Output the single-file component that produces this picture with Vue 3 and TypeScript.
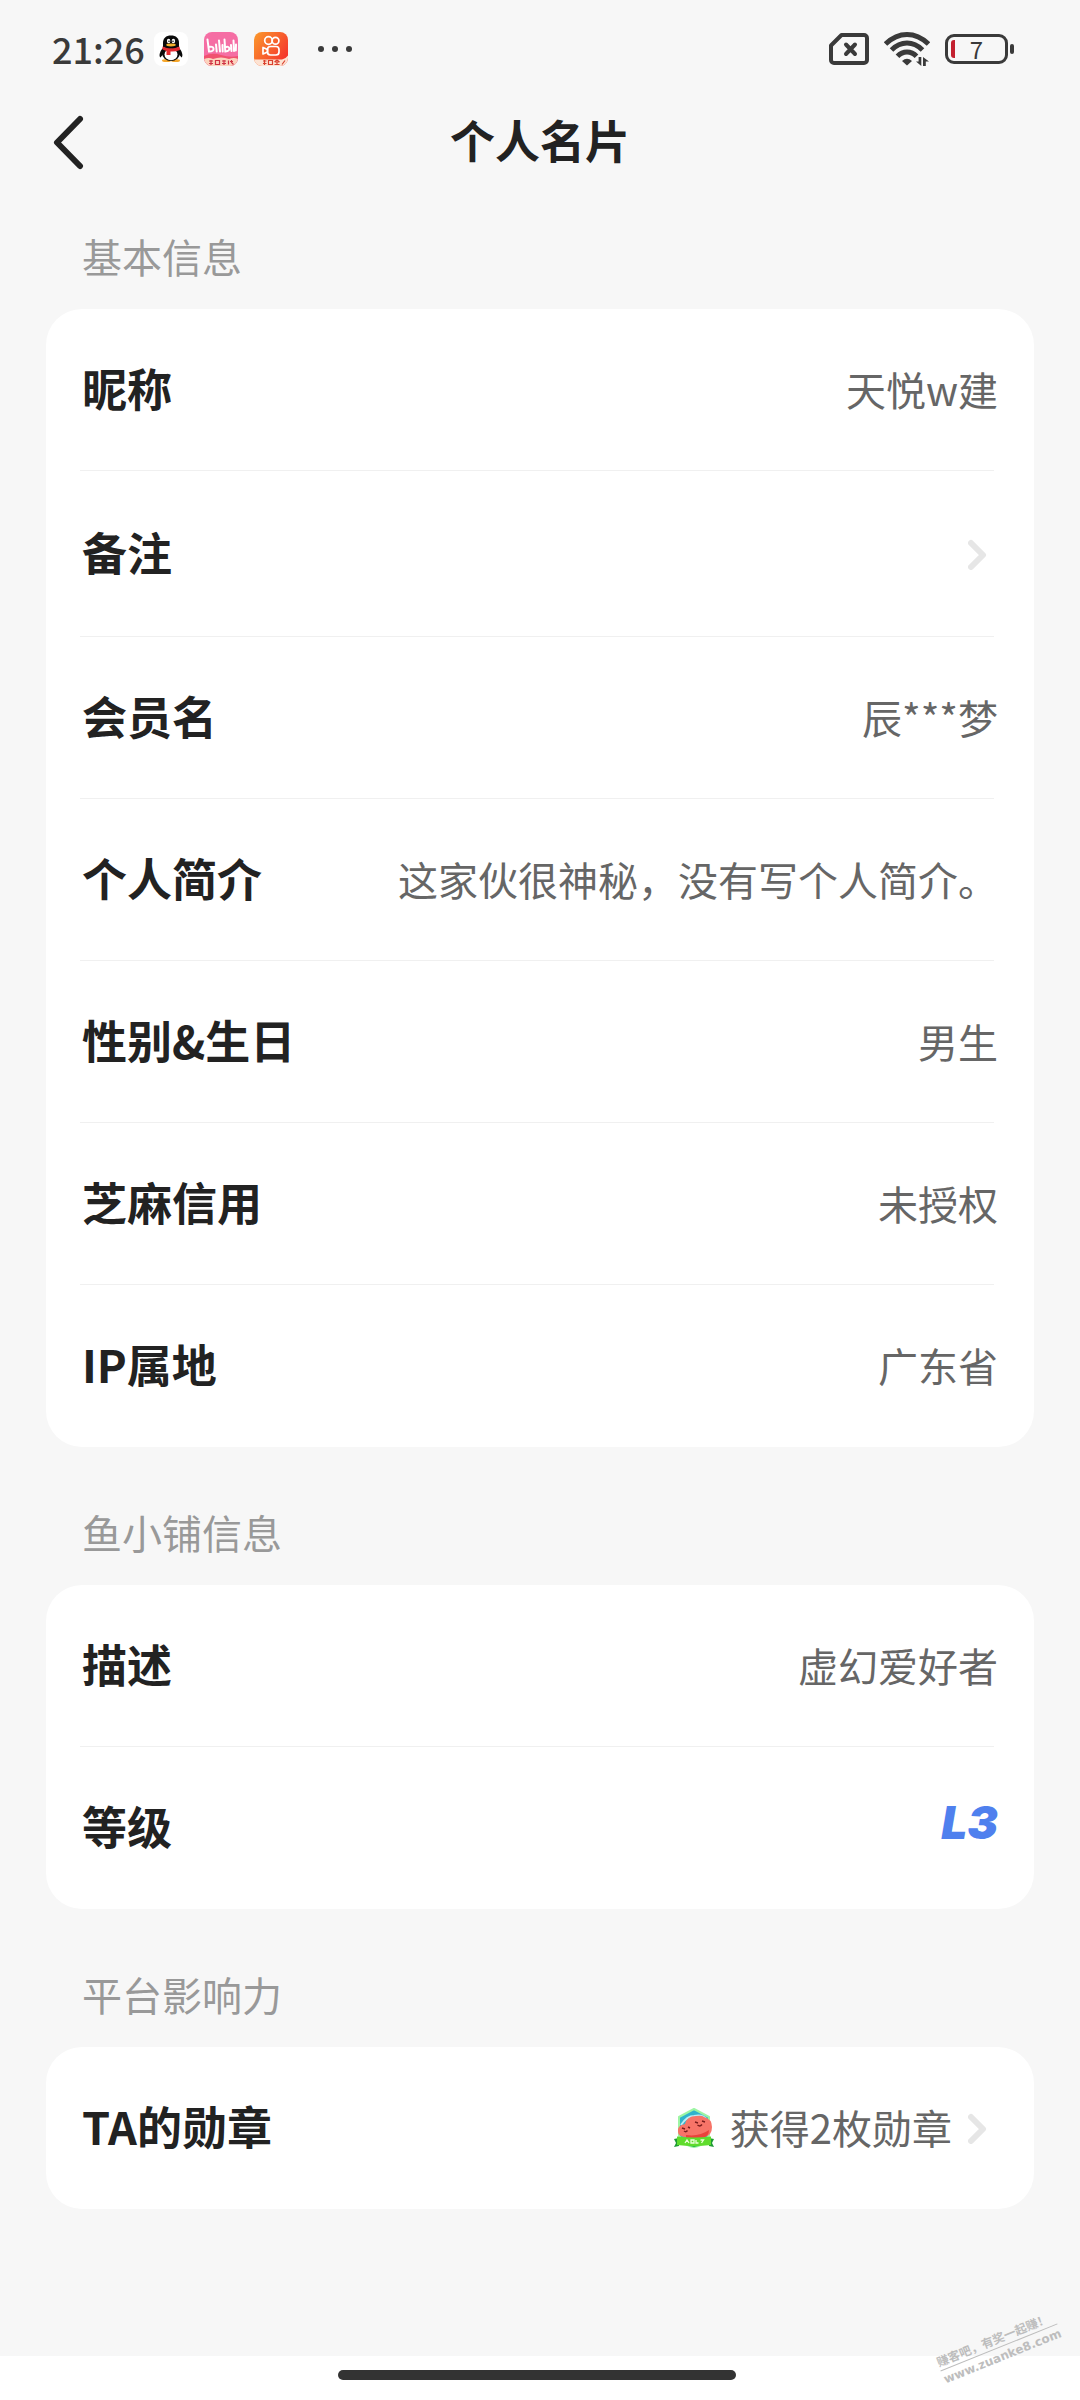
<script setup lang="ts">
interface Row {
  label: string
  value?: string
  link?: boolean
  tall?: boolean
  level?: boolean
  badge?: boolean
}

interface Section {
  title: string
  rows: Row[]
}

const sections: Section[] = [
  {
    title: '基本信息',
    rows: [
      { label: '昵称', value: '天悦w建' },
      { label: '备注', link: true, tall: true },
      { label: '会员名', value: '辰***梦' },
      { label: '个人简介', value: '这家伙很神秘，没有写个人简介。' },
      { label: '性别&生日', value: '男生' },
      { label: '芝麻信用', value: '未授权' },
      { label: 'IP属地', value: '广东省' },
    ],
  },
  {
    title: '鱼小铺信息',
    rows: [
      { label: '描述', value: '虚幻爱好者' },
      { label: '等级', value: 'L3', level: true },
    ],
  },
  {
    title: '平台影响力',
    rows: [{ label: 'TA的勋章', value: '获得2枚勋章', link: true, badge: true }],
  },
]
</script>

<template>
  <div class="page">
    <div class="status">
      <span class="time">21:26</span>
      <div class="apps">
        <!-- QQ -->
        <svg class="app" viewBox="0 0 34 34" aria-hidden="true">
          <rect width="34" height="34" rx="8" fill="#fff" />
          <path d="M9 16C5 20 5 25 6.500 25.500L10 21zM25 16c4 4 4 9 2.500 9.500L24 21z" fill="#0a0a0a" />
          <ellipse cx="12.500" cy="28.500" rx="4.500" ry="1.500" fill="#f6a72c" />
          <ellipse cx="21.500" cy="28.500" rx="4.500" ry="1.500" fill="#f6a72c" />
          <ellipse cx="17" cy="21" rx="9" ry="8" fill="#0a0a0a" />
          <path d="M9 15V11C9 6 12 3.500 17 3.500S25 6 25 11V15z" fill="#0a0a0a" />
          <ellipse cx="17" cy="22.500" rx="6.500" ry="5.800" fill="#fff" />
          <path d="M8.500 14.500Q17 18.500 25.500 14.500L26 18Q21 20 16.500 19.500V23H12.500V19L8.500 17.500z" fill="#e32a30" />
          <ellipse cx="14.600" cy="9" rx="1.700" ry="2.300" fill="#fff" />
          <ellipse cx="19.400" cy="9" rx="1.700" ry="2.300" fill="#fff" />
          <circle cx="15" cy="9.300" r=".8" fill="#111" />
          <circle cx="19" cy="9.300" r=".8" fill="#111" />
          <ellipse cx="17" cy="13" rx="4.800" ry="1.400" fill="#f5b32d" />
        </svg>
        <!-- bilibili -->
        <svg class="app" viewBox="0 0 34 34" aria-hidden="true">
          <defs>
            <clipPath id="biliClip"><rect width="34" height="34" rx="8" /></clipPath>
          </defs>
          <g clip-path="url(#biliClip)">
            <rect width="34" height="34" fill="#f56ea4" />
            <path d="M0 24q8-4 17-1t17 1v10H0z" fill="#f0526f" />
            <path d="M0 27q5-2 9 0 8-3 16 0 5-2 9 0v7H0z" fill="#fbd3bd" />
            <g fill="none" stroke="#fff" stroke-width="2" stroke-linecap="round">
              <path d="M3.500 7.500L5 19.500q5 0 4.500-3-.5-2.500-5-1.500M12 12.500l.7 7M15 8.500l1 11M18.500 13l.2 6.500M20.500 7.500l.8 12q4.500-.5 4-3.200-.5-2.300-4.300-1M27 13l.5 6M29.500 8.500l.5 10.500M32 12.500l-.2 6" />
            </g>
            <path d="M5 29h4M5 31.500h4M7 28v5M11.500 28.500h4v4h-4zM18 29h4M18 31.500h4M20 28v5M24.500 28.500v4M26 29.500h3M27.500 28v2.500l2 2" fill="none" stroke="#cf3345" stroke-width="1.200" />
          </g>
        </svg>
        <!-- Kuaishou -->
        <svg class="app" viewBox="0 0 34 34" aria-hidden="true">
          <defs>
            <clipPath id="ksClip"><rect width="34" height="34" rx="8" /></clipPath>
            <linearGradient id="ksFill" x1="0" y1="0" x2="1" y2=".7">
              <stop offset="0" stop-color="#fb9a2c" />
              <stop offset="1" stop-color="#f5342c" />
            </linearGradient>
          </defs>
          <g clip-path="url(#ksClip)">
            <rect width="34" height="34" fill="url(#ksFill)" />
            <path d="M0 27.500h28q4-1 6-4V34H0z" fill="#fde3d3" />
            <g fill="none" stroke="#fff" stroke-width="1.700" stroke-linejoin="round">
              <circle cx="14.500" cy="8.500" r="3.800" />
              <circle cx="21.500" cy="8.800" r="3.400" />
              <rect x="13.500" y="14.500" width="11.500" height="8.500" rx="3" />
              <path d="M13.500 17.500L9 15.500V22l4.500-2z" />
            </g>
            <path d="M9 29h3.500M9 31.500h3.500M10.500 28v5M14.500 28.500h4v4h-4zM20.500 30h5M23 28l-2.500 2M23 28l2.500 2M23 30v3M20.500 32.500h5M28 32.500l3-4" fill="none" stroke="#d9402f" stroke-width="1.200" />
          </g>
        </svg>
      </div>
      <svg class="dots" viewBox="0 0 34 8" aria-hidden="true">
        <g fill="#3a3a3a">
          <circle cx="3" cy="4" r="3" />
          <circle cx="17" cy="4" r="3" />
          <circle cx="31" cy="4" r="3" />
        </g>
      </svg>
      <div class="system">
        <svg class="sim" viewBox="0 0 40 32" aria-hidden="true">
          <path d="M12.500 2H35a3 3 0 0 1 3 3v22a3 3 0 0 1-3 3H5a3 3 0 0 1-3-3V12.500z" fill="none" stroke="#3a3a3a" stroke-width="4" stroke-linejoin="round" />
          <path d="M17 11.500l9 9.500M26 11.500L17 21" fill="none" stroke="#3a3a3a" stroke-width="4" stroke-linecap="round" />
        </svg>
        <svg class="wifi" viewBox="0 0 46 34" aria-hidden="true">
          <g fill="none" stroke="#3a3a3a" stroke-width="5">
            <path d="M1.500 12Q11.500 2.500 23 2.500T44.500 12" />
            <path d="M7.500 18Q14.500 11 23 11T38.500 18" />
            <path d="M13.500 24.300Q17.500 20 23 20T32.500 24.300" />
          </g>
          <path d="M18 29q5-4.500 10 0l-5 4.500z" fill="#3a3a3a" />
          <path d="M37.300 25v9l-5.300-4.600h2.600V25zM39 34v-9l6 4.600h-3.200V34z" fill="#3a3a3a" />
        </svg>
        <div class="battery">
          <span class="charge"></span>
          <span>7</span>
        </div>
        <span class="tip"></span>
      </div>
    </div>

    <header class="nav">
      <button class="back" type="button" aria-label="返回">
        <svg viewBox="0 0 32 56" aria-hidden="true">
          <path d="M28 5L5 28.500 28 52" fill="none" stroke="#222" stroke-width="6" stroke-linecap="round" stroke-linejoin="round" />
        </svg>
      </button>
      <h1>个人名片</h1>
    </header>

    <main>
      <section v-for="section in sections" :key="section.title">
        <h2>{{ section.title }}</h2>
        <div class="card">
          <component
            :is="row.link ? 'button' : 'div'"
            v-for="row in section.rows"
            :key="row.label"
            :type="row.link ? 'button' : undefined"
            class="row"
            :class="{ tall: row.tall }"
          >
            <span class="label">{{ row.label }}</span>
            <span class="side">
              <svg v-if="row.badge" class="badge" viewBox="0 0 40 40" aria-hidden="true">
                <path d="M20 1L35 9v19l-8 9q-7 4-14 0l-8-9V9z" fill="#2fb3cc" stroke="#9df5a4" stroke-width="2" stroke-linejoin="round" />
                <path d="M12 36h16q-8 6-16 0z" fill="#27b63d" />
                <path d="M7 17q6-9 13-9 9-2 13 4" fill="none" stroke="#b9ecf4" stroke-width="2" />
                <path d="M4 24q-1-7 7-8 2-8 11-8 6-1 8 1 8 2 8 10 0 9-8 10H10q-6-1-6-5z" fill="#f77468" />
                <path d="M12 27q13 2 23-5 0 6-6 8H12z" fill="#ea423c" />
                <path d="M8 20l3 1M14 19l2 1M10 23q2 1.500 3.500-.5M21 14l3 1M28 13l3 1M23.500 17q2.500 2 4.500-.5" fill="none" stroke="#7c1d1d" stroke-width="1.400" />
                <path d="M0 31l5-1v8l-5 1 2-4zM40 31l-5-1v8l5 1-2-4z" fill="#1e9a34" />
                <path d="M3 28.500q17 2 34 0V37q-17 2-34 0z" fill="#5fdc2c" />
                <path d="M11 35l2-3 2 3M17 32h3v3h-3zM22 32v3h2.500M26.500 32h3l-2 3" fill="none" stroke="#eaffd8" stroke-width="1.300" />
              </svg>
              <span v-if="row.value" :class="row.level ? 'level' : 'value'">{{ row.value }}</span>
              <svg v-if="row.link" class="chevron" viewBox="0 0 30 32" aria-hidden="true">
                <path d="M3 5l12 12L3 29" fill="none" stroke="#e6e6e6" stroke-width="6" stroke-linecap="round" stroke-linejoin="round" />
              </svg>
            </span>
          </component>
        </div>
      </section>
    </main>

    <footer class="home">
      <span class="handle"></span>
    </footer>

    <div class="watermark">
      <span class="slogan">赚客吧，有奖一起赚！</span>
      <span class="site">www.zuanke8.com</span>
    </div>
  </div>
</template>

<style>
body {
  margin: 0;
  background: #f7f7f7;
}
</style>

<style scoped>
.page {
  position: relative;
  display: flex;
  flex-direction: column;
  min-height: 100vh;
  overflow: hidden;
  background: #f7f7f7;
  color: #222;
  font-family: "Noto Sans CJK SC", "Noto Sans", sans-serif;
}

.status {
  display: flex;
  align-items: center;
  height: 98px;
  padding: 0 66px 0 52px;
  color: #3a3a3a;
}

.time {
  padding-bottom: 2px;
  font-size: 36px;
  line-height: 48px;
  font-weight: 500;
}

.apps {
  display: flex;
  gap: 16px;
  margin-left: 9px;
}

.app {
  width: 34px;
  height: 34px;
}

.dots {
  width: 34px;
  height: 8px;
  margin-left: 30px;
}

.system {
  display: flex;
  align-items: center;
  margin-left: auto;
}

.sim {
  width: 40px;
  height: 32px;
}

.wifi {
  width: 46px;
  height: 34px;
  margin: 0 15px;
}

.battery {
  position: relative;
  display: flex;
  align-items: center;
  justify-content: center;
  box-sizing: border-box;
  width: 63px;
  height: 30px;
  border: 3px solid #3a3a3a;
  border-radius: 9px;
  font-size: 24px;
  line-height: 24px;
}

.charge {
  position: absolute;
  left: 3px;
  top: 3px;
  bottom: 3px;
  width: 4px;
  border-radius: 3px 0 0 3px;
  background: #c3202f;
}

.tip {
  width: 4px;
  height: 10px;
  margin-left: 2px;
  border-radius: 2px;
  background: #3a3a3a;
}

.nav {
  display: grid;
  grid-template-columns: 1fr auto 1fr;
  align-items: center;
  height: 88px;
  padding: 0 52px;
}

button {
  margin: 0;
  padding: 0;
  border: 0;
  background: none;
  color: inherit;
  font: inherit;
  text-align: left;
  cursor: pointer;
}

.back {
  width: 32px;
  height: 56px;
}

.back svg {
  display: block;
  width: 32px;
  height: 56px;
}

h1,
.label {
  margin: 0;
  padding-bottom: 4px;
  font-size: 45px;
  line-height: 60px;
  font-weight: 700;
}

main {
  display: flex;
  flex-direction: column;
  gap: 56px;
  padding: 41px 46px;
}

h2 {
  margin: 0 0 24px;
  padding-left: 36px;
  color: #999;
  font-size: 40px;
  line-height: 58px;
  font-weight: 400;
}

.card {
  border-radius: 36px;
  background: #fff;
}

.row {
  position: relative;
  display: flex;
  align-items: center;
  justify-content: space-between;
  width: 100%;
  min-height: 162px;
  padding: 0 36px;
}

.tall {
  min-height: 166px;
}

.row:not(:last-child)::after {
  content: "";
  position: absolute;
  right: 40px;
  bottom: 0;
  left: 34px;
  height: 1px;
  background: #f0f0f0;
}

.row,
.side {
  box-sizing: border-box;
}

.side {
  display: flex;
  align-items: center;
  gap: 16px;
}

.value {
  padding-bottom: 2px;
  color: #666;
  font-size: 40px;
  line-height: 60px;
}

.level {
  padding-bottom: 12px;
  color: #4f80ee;
  font-family: Inter, sans-serif;
  font-size: 46px;
  line-height: 48px;
  font-style: italic;
  font-weight: 900;
}

.badge {
  width: 40px;
  height: 40px;
}

.chevron {
  width: 30px;
  height: 32px;
}

.home {
  display: flex;
  justify-content: center;
  align-items: flex-start;
  box-sizing: border-box;
  height: 44px;
  margin-top: auto;
  padding: 14px 6px 0 0;
  background: #fff;
}

.handle {
  width: 37%;
  height: 10px;
  border-radius: 5px;
  background: #333;
}

.watermark {
  position: absolute;
  right: 18px;
  bottom: 34px;
  display: flex;
  flex-direction: column;
  color: #bdbdbd;
  font-weight: 700;
  transform: rotate(-22deg);
}

.slogan {
  border-bottom: 1px solid #bdbdbd;
  font-size: 12px;
  line-height: 18px;
}

.site {
  font-family: "DejaVu Sans", sans-serif;
  font-size: 12px;
  line-height: 18px;
}
</style>
